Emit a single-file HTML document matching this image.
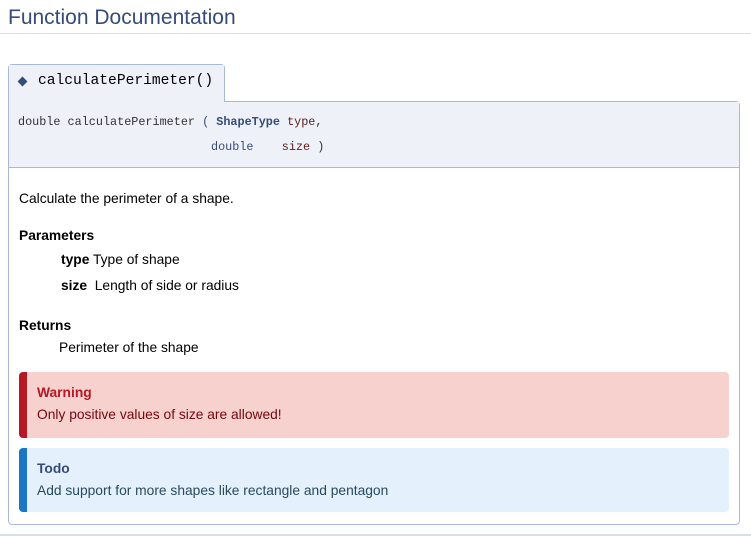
<!DOCTYPE html>
<html><head><style>
body{margin:0;width:751px;height:536px;background:#fff;font-family:"Liberation Sans",sans-serif;position:relative;overflow:hidden;color:#000}
.a{position:absolute;white-space:nowrap}
.m{font-family:"Liberation Mono",monospace}
</style></head><body>
<div class="a" style="left:8px;top:6px;font-size:21px;color:#354c7b">Function Documentation</div>
<div class="a" style="left:0;top:33px;width:751px;height:1px;background:#d9dde5"></div>
<div class="a" style="left:8px;top:64px;width:215px;height:40px;background:#eef1f8;border:1px solid #a8b8d9;border-bottom:none;border-radius:4px 4px 0 0"></div>
<div class="a" style="left:8px;top:101px;width:730px;height:422px;border:1px solid #a8b8d9;border-radius:0 4px 4px 4px"></div>
<div class="a" style="left:9px;top:102px;width:730px;height:65px;background:#eef1f8;border-bottom:1px solid #a8b8d9"></div>
<div class="a" style="left:9px;top:65px;width:215px;height:40px;background:#eef1f8"></div>
<div class="a" style="left:19px;top:78px;width:7px;height:7px;background:#354c7b;transform:rotate(45deg)"></div>
<div class="a m" style="left:38px;top:73px;font-size:14.6px">calculatePerimeter()</div>
<div class="a m" style="left:18px;top:115px;font-size:11.8px;color:#333">double calculatePerimeter <span style="color:#354c7b">(</span> <span style="color:#354c7b;font-weight:bold">ShapeType</span> <span style="color:#602020">type</span>,</div>
<div class="a m" style="left:211px;top:140px;font-size:11.8px;color:#354c7b">double &nbsp;&nbsp;&nbsp;<span style="color:#602020">size</span> <span style="color:#333">)</span></div>
<div class="a" style="left:19px;top:191px;font-size:13.8px">Calculate the perimeter of a shape.</div>
<div class="a" style="left:19px;top:228px;font-size:13.8px;font-weight:bold">Parameters</div>
<div class="a" style="left:61px;top:252px;font-size:13.8px"><b>type</b> Type of shape</div>
<div class="a" style="left:61px;top:278px;font-size:13.8px"><b>size</b> &nbsp;Length of side or radius</div>
<div class="a" style="left:19px;top:318px;font-size:13.8px;font-weight:bold">Returns</div>
<div class="a" style="left:59px;top:340px;font-size:13.8px">Perimeter of the shape</div>
<div class="a" style="left:19px;top:372px;width:702px;height:66px;background:#f7d1ce;border-left:8px solid #b61825;border-radius:4px"></div>
<div class="a" style="left:37px;top:385px;font-size:13.8px;font-weight:bold;color:#b61825">Warning</div>
<div class="a" style="left:37px;top:407px;font-size:13.8px;color:#75070f">Only positive values of size are allowed!</div>
<div class="a" style="left:19px;top:448px;width:702px;height:64px;background:#e4f1fd;border-left:8px solid #1b77c5;border-radius:4px"></div>
<div class="a" style="left:37px;top:461px;font-size:13.8px;font-weight:bold;color:#354c7b">Todo</div>
<div class="a" style="left:37px;top:483px;font-size:13.8px;color:#274a5c">Add support for more shapes like rectangle and pentagon</div>
<div class="a" style="left:0;top:534px;width:751px;height:2px;background:#d9dde5"></div>
</body></html>
